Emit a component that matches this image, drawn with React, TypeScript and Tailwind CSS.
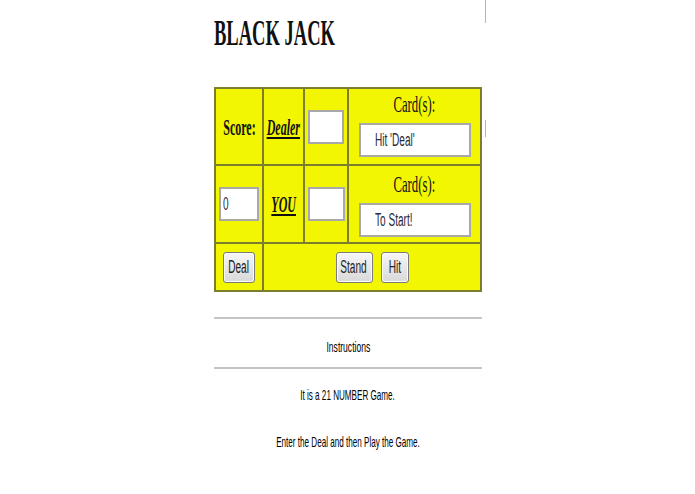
import type { ReactNode } from 'react'

const LINE = 'border-[#7d7d2e]'

function Squeeze({ children, className = '' }: { children: ReactNode; className?: string }) {
  return <span className={`inline-block whitespace-nowrap ${className}`}>{children}</span>
}

function Field({ className, text }: { className: string; text?: string }) {
  return (
    <div
      className={`flex items-center overflow-hidden border-2 border-[#a8a8a8] bg-white font-['Liberation_Sans',Arial,sans-serif] text-[18px] leading-none text-[#2a2a3a] ${className}`}
    >
      {text && <Squeeze className="origin-left scale-x-[0.56]">{text}</Squeeze>}
    </div>
  )
}

function Btn({ label, className }: { label: string; className: string }) {
  return (
    <button
      type="button"
      className={`flex h-[31px] items-center justify-center rounded-[3px] border border-[#7a7a7a] bg-gradient-to-b from-[#f6f6f6] to-[#d9d9d9] font-['Liberation_Sans',Arial,sans-serif] text-[18px] leading-none text-[#222] shadow-[inset_0_0_0_1px_#fbfbfb] ${className}`}
    >
      <Squeeze className="scale-x-[0.56]">{label}</Squeeze>
    </button>
  )
}

function Cards({ text, pad }: { text: string; pad: string }) {
  return (
    <div className={`flex flex-1 flex-col items-center ${pad}`}>
      <div className="flex h-[27px] justify-center font-['Liberation_Serif',serif] text-[24px] leading-[27px] text-[#111]">
        <Squeeze className="scale-x-[0.53]">Card(s):</Squeeze>
      </div>
      <Field className="mt-[5px] h-[34px] w-[112px] pl-[14px]" text={text} />
    </div>
  )
}

export default function App() {
  return (
    <div className="relative min-h-[494px] bg-white pt-[13px]">
      <div className="absolute left-[485px] top-0 h-[23px] w-px bg-[#a9b5cc]" />
      <div className="absolute left-[485px] top-[120px] h-[17px] w-px bg-[#a9b5cc]" />

      <div className="ml-[214px] w-[268px]">
        <h1 className="h-[40px] font-['Liberation_Serif',serif] text-[36px] font-bold leading-[40px] text-[#111]">
          <Squeeze className="origin-left scale-x-[0.515]">BLACK JACK</Squeeze>
        </h1>

        <div className={`mt-[34px] border-2 ${LINE} bg-[#f2f600]`}>
          {/* dealer row */}
          <div className={`flex h-[77px] border-b-2 ${LINE}`}>
            <div className={`flex w-[48px] items-center justify-center border-r-2 ${LINE} font-['Liberation_Serif',serif] text-[24px] font-bold text-[#111]`}>
              <Squeeze className="scale-x-[0.5]">Score:</Squeeze>
            </div>
            <div className={`flex w-[41px] items-center justify-center border-r-2 ${LINE} font-['Liberation_Serif',serif] text-[24px] font-bold italic text-[#111]`}>
              <Squeeze className="scale-x-[0.5] underline">Dealer</Squeeze>
            </div>
            <div className={`flex w-[44px] items-center justify-center border-r-2 ${LINE}`}>
              <Field className="h-[34px] w-[36px]" />
            </div>
            <Cards text="Hit 'Deal'" pad="pt-[2px]" />
          </div>

          {/* player row */}
          <div className={`flex h-[78px] border-b-2 ${LINE}`}>
            <div className={`flex w-[48px] items-center justify-center border-r-2 ${LINE}`}>
              <Field className="h-[34px] w-[40px] pl-[2px]" text="0" />
            </div>
            <div className={`flex w-[41px] items-center justify-center border-r-2 ${LINE} font-['Liberation_Serif',serif] text-[24px] font-bold italic text-[#111]`}>
              <Squeeze className="scale-x-[0.5] underline">YOU</Squeeze>
            </div>
            <div className={`flex w-[44px] items-center justify-center border-r-2 ${LINE}`}>
              <Field className="h-[34px] w-[37px]" />
            </div>
            <Cards text="To Start!" pad="pt-[5px]" />
          </div>

          {/* buttons */}
          <div className="flex h-[46px]">
            <div className={`flex w-[48px] items-center justify-center border-r-2 ${LINE}`}>
              <Btn label="Deal" className="w-[32px]" />
            </div>
            <div className="flex flex-1 items-center justify-center gap-[8px]">
              <Btn label="Stand" className="w-[37px]" />
              <Btn label="Hit" className="w-[28px]" />
            </div>
          </div>
        </div>

        <div className="mt-[25px] h-[2px] bg-[#c4c4c4]" />
        <div className="mt-[19px] flex h-[17px] justify-center font-['Liberation_Sans',Arial,sans-serif] text-[15px] leading-[17px] text-black">
          <Squeeze className="scale-x-[0.57]">Instructions</Squeeze>
        </div>
        <div className="mt-[12px] h-[2px] bg-[#c4c4c4]" />

        <div className="mt-[17px] flex h-[17px] justify-center font-['Liberation_Sans',Arial,sans-serif] text-[15px] leading-[17px] text-black">
          <Squeeze className="scale-x-[0.54]">It is a 21 NUMBER Game.</Squeeze>
        </div>
        <div className="mt-[30px] flex h-[17px] justify-center font-['Liberation_Sans',Arial,sans-serif] text-[15px] leading-[17px] text-black">
          <Squeeze className="scale-x-[0.54]">Enter the Deal and then Play the Game.</Squeeze>
        </div>
      </div>
    </div>
  )
}
